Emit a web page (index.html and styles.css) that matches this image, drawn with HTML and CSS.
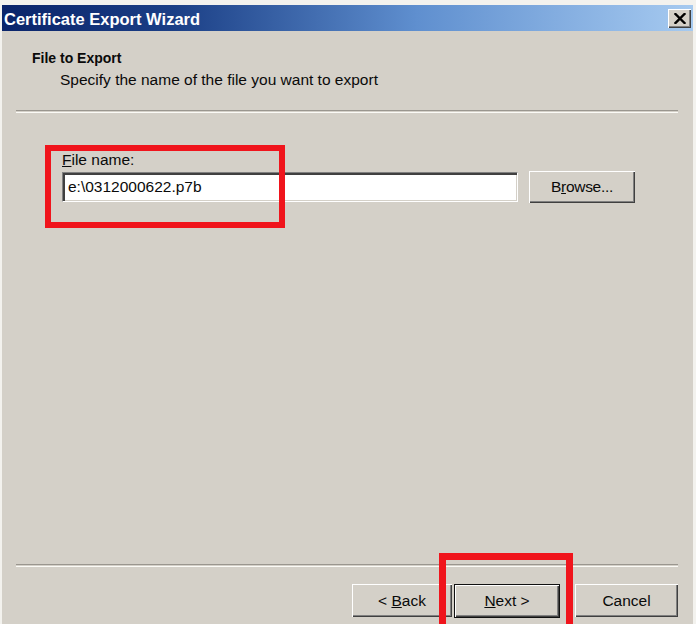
FILE: index.html
```html
<!DOCTYPE html>
<html lang="en">
<head>
<meta charset="utf-8">
<title>Certificate Export Wizard</title>
<link rel="stylesheet" href="styles.css">
</head>
<body>
<div class="screen">
  <div class="dialog">
    <div class="titlebar">
      <span class="title">Certificate Export Wizard</span>
      <span class="close" aria-label="Close">
        <svg width="12" height="11" viewBox="0 0 12 11"><path d="M1.5 1 L10.5 10 M10.5 1 L1.5 10" stroke="#000" stroke-width="2.4" stroke-linecap="square" fill="none"/></svg>
      </span>
    </div>
    <div class="header">
      <div class="h-title">File to Export</div>
      <div class="h-sub">Specify the name of the file you want to export</div>
    </div>
    <div class="sep"></div>
    <div class="content">
      <div class="label"><u>F</u>ile name:</div>
      <div class="row">
        <div class="input">e:\0312000622.p7b</div>
        <div class="btn browse"><span>B<u>r</u>owse...</span></div>
      </div>
    </div>
    <div class="sep"></div>
    <div class="footer">
      <div class="btn"><span>&lt; <u>B</u>ack</span></div>
      <div class="btn default"><span><u>N</u>ext &gt;</span></div>
      <div class="btn cancel"><span>Cancel</span></div>
    </div>
  </div>
  <div class="mark mark-file"></div>
  <div class="mark mark-next"></div>
</div>
</body>
</html>
```
FILE: styles.css
```css
html, body {
  margin: 0;
  padding: 0;
  background: #f3f2ee;
}
.screen {
  position: relative;
  width: 696px;
  height: 624px;
  overflow: hidden;
  font-family: "Liberation Sans", Arial, sans-serif;
  color: #0a0a0a;
}
.dialog {
  margin: 5px 3px 0 2px;
  height: 619px;
  background: #d4d0c8;
  display: flex;
  flex-direction: column;
}
.titlebar {
  height: 26px;
  flex: none;
  display: flex;
  align-items: center;
  justify-content: space-between;
  background: linear-gradient(to right, #0a246a 0%, #1b3f86 25%, #5f8fcf 60%, #a6caf0 100%);
  padding: 0 2px 0 2px;
}
.title {
  color: #fff;
  font-weight: bold;
  font-size: 16.5px;
  padding-top: 2px;
}
.close {
  width: 23px;
  height: 19px;
  background: #d4d0c8;
  display: flex;
  align-items: center;
  justify-content: center;
  box-shadow: inset 1px 1px #fff, inset -1px -1px #404040, inset -2px -2px #808080;
}
.header {
  height: 79px;
  flex: none;
  padding: 19px 0 0 30px;
  box-sizing: border-box;
}
.h-title {
  font-weight: bold;
  font-size: 14px;
  line-height: 16px;
}
.h-sub {
  font-size: 15.5px;
  line-height: 18px;
  margin: 5px 0 0 28px;
}
.sep {
  flex: none;
  height: 1px;
  margin: 0 15px 0 14px;
  border-top: 1px solid #9a968f;
  border-bottom: 1px solid #fbfaf6;
}
.content {
  flex: 1;
  padding: 38px 0 0 60px;
}
.label {
  font-size: 15.5px;
  line-height: 18px;
}
.row {
  display: flex;
  align-items: center;
  gap: 11px;
  margin-top: 2px;
}
.input {
  width: 456px;
  height: 30px;
  box-sizing: border-box;
  background: #fff;
  border-top: 1px solid #808080;
  border-left: 1px solid #808080;
  border-right: 1px solid #fff;
  border-bottom: 1px solid #fff;
  box-shadow: inset 2px 2px #404040, inset -1px -1px #d4d0c8;
  font-size: 15.5px;
  line-height: 28px;
  padding-left: 5px;
}
.btn {
  width: 100px;
  height: 33px;
  box-sizing: border-box;
  display: flex;
  align-items: center;
  justify-content: center;
  font-size: 15.5px;
  background: #d4d0c8;
  box-shadow: inset 1px 1px #fff, inset -1px -1px #404040, inset -2px -2px #808080;
}
.browse {
  width: 106px;
  height: 32px;
  letter-spacing: -0.3px;
}
.footer {
  height: 57px;
  flex: none;
  display: flex;
  align-items: flex-start;
  padding: 17px 15px 0 0;
  box-sizing: border-box;
  justify-content: flex-end;
}
.btn.default {
  width: 106px;
  height: 34px;
  margin-left: 2px;
  border: 1px solid #111;
  box-shadow: inset 1px 1px #fff, inset -1px -1px #404040, inset -2px -2px #808080;
}
.btn.cancel {
  width: 103px;
  margin-left: 15px;
}
.mark {
  position: absolute;
  border: 6px solid #f0141c;
  box-sizing: border-box;
}
.mark-file {
  left: 45px;
  top: 145px;
  width: 240px;
  height: 83px;
}
.mark-next {
  left: 439px;
  top: 553px;
  width: 134px;
  height: 90px;
  border-width: 7px;
}
```
